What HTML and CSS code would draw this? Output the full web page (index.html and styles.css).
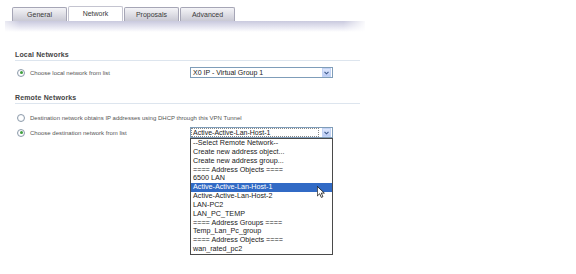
FILE: index.html
```html
<!DOCTYPE html>
<html lang="en">
<head>
    <meta charset="UTF-8">
    <title>VPN Policy - Network</title>
    <link rel="stylesheet" href="styles.css">
</head>
<body>

    <!-- Tab strip -->
    <div class="tabs">
        <div class="tab">General</div>
        <div class="tab active">Network</div>
        <div class="tab">Proposals</div>
        <div class="tab">Advanced</div>
    </div>
    <div class="tab-band"></div>

    <!-- Local networks -->
    <div class="section local">
        <div class="section-title">Local Networks</div>
        <div class="row first">
            <div class="opt"><span class="radio checked"></span>Choose local network from list</div>
            <div class="select">
                <span class="select-text">X0 IP - Virtual Group 1</span>
                <span class="select-btn">
                    <svg width="5" height="4" viewBox="0 0 5 4"><path d="M0.5 0.8 L2.5 2.8 L4.5 0.8" fill="none" stroke="#3f5a8c" stroke-width="1.1"/></svg>
                </span>
            </div>
        </div>
    </div>

    <!-- Remote networks -->
    <div class="section remote">
        <div class="section-title">Remote Networks</div>
        <div class="row first">
            <div class="opt wide"><span class="radio"></span>Destination network obtains IP addresses using DHCP through this VPN Tunnel</div>
        </div>
        <div class="row second">
            <div class="opt"><span class="radio checked"></span>Choose destination network from list</div>
            <div class="select-wrap">
                <div class="select open">
                    <span class="select-text">Active-Active-Lan-Host-1</span>
                    <span class="select-btn">
                        <svg width="5" height="4" viewBox="0 0 5 4"><path d="M0.5 0.8 L2.5 2.8 L4.5 0.8" fill="none" stroke="#3f5a8c" stroke-width="1.1"/></svg>
                    </span>
                </div>
                <ul class="dropdown">
                    <li>--Select Remote Network--</li>
                    <li>Create new address object...</li>
                    <li>Create new address group...</li>
                    <li>==== Address Objects ====</li>
                    <li>6500 LAN</li>
                    <li class="selected">Active-Active-Lan-Host-1
                        <svg class="cursor" width="8" height="12" viewBox="0 0 13 19">
                            <path d="M0.5 0.5 L0.5 16 L4.3 12.3 L7 18.3 L9.6 17.2 L7 11.3 L12 11.3 Z" fill="#fff" stroke="#000" stroke-width="1.2" stroke-linejoin="round"/>
                        </svg>
                    </li>
                    <li>Active-Active-Lan-Host-2</li>
                    <li>LAN-PC2</li>
                    <li>LAN_PC_TEMP</li>
                    <li>==== Address Groups ====</li>
                    <li>Temp_Lan_Pc_group</li>
                    <li>==== Address Objects ====</li>
                    <li>wan_rated_pc2</li>
                </ul>
            </div>
        </div>
    </div>

</body>
</html>
```

FILE: styles.css
```css
body {
    font-family: 'Liberation Sans', Arial, sans-serif;
    margin: 0;
    padding: 0;
    background: #ffffff;
    color: #333333;
}

/* Tabs */
.tabs {
    display: flex;
    align-items: flex-end;
    gap: 1px;
    margin: 6px 0 0 12px;
    height: 15px;
}

.tab {
    width: 53px;
    height: 13px;
    line-height: 13px;
    border: 1px solid #a6a6b6;
    border-bottom: none;
    border-radius: 2px 2px 0 0;
    background: linear-gradient(#f4f4f7, #c9c9d4);
    font-size: 7px;
    text-align: center;
    color: #3a3a3a;
}

.tab.active {
    height: 14px;
    line-height: 14px;
    background: #ffffff;
    border-color: #c4c4d0;
}

.tab-band {
    margin-left: 5px;
    width: 360px;
    height: 11px;
    background: linear-gradient(#c9c9de, #eeeef6 70%, #ffffff);
    -webkit-mask-image: linear-gradient(to right, rgba(0,0,0,0.4), #000 4%, #000 94%, rgba(0,0,0,0.1));
}

/* Sections */
.section {
    margin-left: 15px;
    width: 345px;
}

.section.local {
    margin-top: 19px;
}

.section.remote {
    margin-top: 16px;
}

.section-title {
    font-size: 7px;
    font-weight: bold;
    line-height: 8px;
    padding-bottom: 1px;
    letter-spacing: 0.15px;
    color: #444444;
    border-bottom: 1px solid #dde5ee;
}

.row {
    display: flex;
    align-items: center;
    min-height: 11px;
    padding-left: 2px;
}

.row.second {
    align-items: flex-start;
}

.local .row.first {
    margin-top: 6px;
}

.remote .row.first {
    margin-top: 8px;
}

.remote .row.second {
    margin-top: 4px;
}

.opt {
    display: flex;
    align-items: center;
    width: 173px;
    height: 11px;
    font-size: 6px;
    color: #555555;
    white-space: nowrap;
}

.opt.wide {
    width: auto;
}

.radio {
    width: 6px;
    height: 6px;
    margin-right: 5px;
    border: 1px solid #8e9cab;
    border-radius: 50%;
    background: radial-gradient(circle, #ffffff 40%, #e6ebf1);
    display: flex;
    align-items: center;
    justify-content: center;
}

.radio.checked::after {
    content: "";
    width: 3px;
    height: 3px;
    border-radius: 50%;
    background: #3f9f3f;
}

/* Select boxes */
.select {
    width: 141px;
    height: 9px;
    border: 1px solid #7f9db9;
    background: #ffffff;
    display: flex;
    align-items: center;
    justify-content: space-between;
}

.select-wrap {
    display: flex;
    flex-direction: column;
}

.select-text {
    font-size: 7px;
    padding-left: 2px;
    color: #222222;
    white-space: nowrap;
}

.select.open .select-text {
    outline: 1px dotted #888888;
    outline-offset: -1px;
    width: 126px;
    height: 9px;
    line-height: 9px;
}

.select-btn {
    width: 7px;
    height: 7px;
    margin-right: 1px;
    border: 1px solid #c3d3f4;
    background: linear-gradient(#dfe8fd, #b9cbf4);
    display: flex;
    align-items: center;
    justify-content: center;
}

.dropdown {
    width: 141px;
    margin: 0;
    padding: 0;
    list-style: none;
    border: 1px solid #4a4a4a;
    background: #ffffff;
}

.dropdown li {
    position: relative;
    height: 8.85px;
    line-height: 8.85px;
    padding-left: 2px;
    font-size: 7.2px;
    color: #222222;
    white-space: nowrap;
}

.dropdown li.selected {
    background: #316ac5;
    color: #ffffff;
}

/* mouse pointer over the open list */
.cursor {
    position: absolute;
    left: 126px;
    top: 3px;
}
```
